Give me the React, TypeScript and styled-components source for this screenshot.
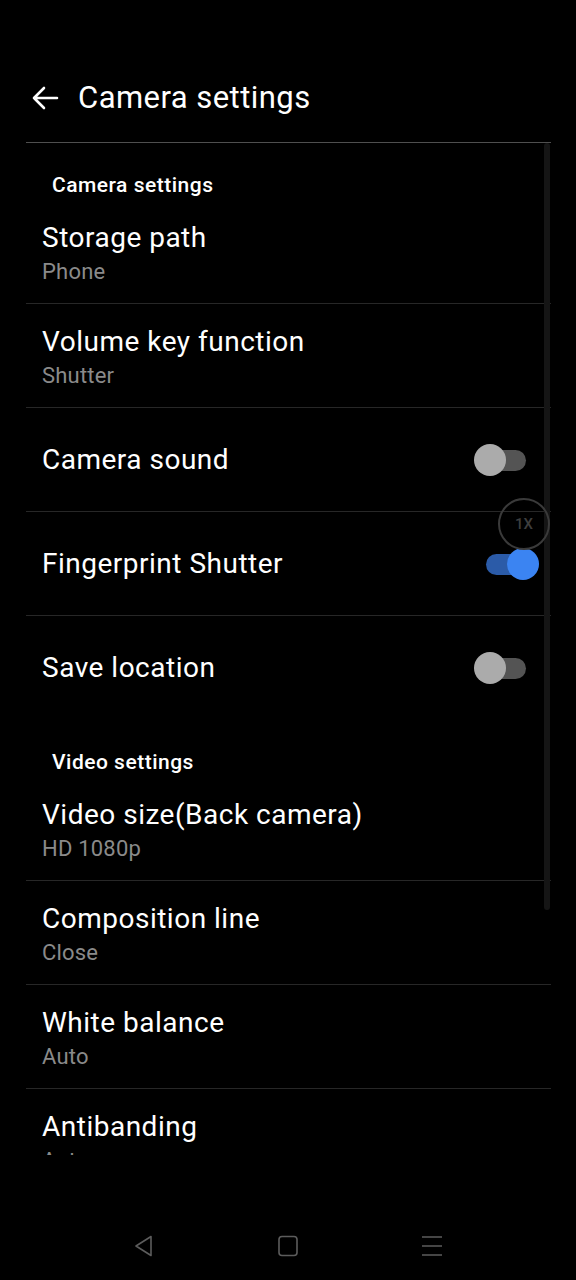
import React from "react";
import styled, { createGlobalStyle } from "styled-components";

const Global = createGlobalStyle`
  html, body { margin: 0; padding: 0; background: #000; }
  body { font-family: Roboto, "Noto Sans", "Liberation Sans", sans-serif; color: #fff; }
  * { box-sizing: border-box; }
`;

const Screen = styled.div`
  width: 576px;
  height: 1280px;
  background: #000;
  display: flex;
  flex-direction: column;
  overflow: hidden;
`;

const Header = styled.div`
  height: 142px;
  display: flex;
  align-items: flex-end;
  padding: 0 0 24px 31px;
  gap: 19px;
`;

const BackIcon = styled.svg`
  width: 28px;
  height: 28px;
  margin-bottom: 6px;
`;

const Title = styled.h1`
  margin: 0;
  font-size: 31px;
  line-height: 40px;
  font-weight: 400;
  color: #fff;
  letter-spacing: 0.45px;
`;

const ListArea = styled.div`
  margin: 0 25px 0 26px;
  height: 1013px;
  border-top: 1px solid #4f4f4f;
  position: relative;
  overflow: hidden;
`;

const Scrollbar = styled.div`
  position: absolute;
  right: 1px;
  top: 0;
  width: 6px;
  height: 767px;
  background: #151515;
  border-radius: 3px;
`;

const SectionHeader = styled.div`
  height: 57px;
  padding: 29px 0 0 26px;
  font-size: 21px;
  line-height: 26px;
  font-weight: 500;
  color: #fff;
  letter-spacing: 0.5px;
`;

const Row = styled.div<{ $last?: boolean }>`
  min-height: 104px;
  display: flex;
  align-items: center;
  justify-content: space-between;
  padding: 0 12px 0 16px;
  border-bottom: 1px solid ${(p) => (p.$last ? "transparent" : "#272727")};
`;

const TextCol = styled.div<{ $two?: boolean }>`
  display: flex;
  flex-direction: column;
  align-self: ${(p) => (p.$two ? "flex-start" : "center")};
  padding-top: ${(p) => (p.$two ? "21px" : "0")};
`;

const ItemTitle = styled.div`
  font-size: 28px;
  line-height: 34px;
  color: #fff;
  letter-spacing: 0.5px;
`;

const ItemSub = styled.div`
  font-size: 22px;
  line-height: 34px;
  color: #8a8a8a;
  letter-spacing: 0.2px;
`;

const SwitchBox = styled.div`
  position: relative;
  width: 65px;
  height: 32px;
  flex: none;
`;

const Track = styled.div<{ $on?: boolean }>`
  position: absolute;
  left: 12px;
  top: 6px;
  width: 40px;
  height: 21px;
  border-radius: 11px;
  background: ${(p) => (p.$on ? "#2b5ba8" : "#545454")};
`;

const Thumb = styled.div<{ $on?: boolean }>`
  position: absolute;
  top: 0;
  left: ${(p) => (p.$on ? "33px" : "0")};
  width: 32px;
  height: 32px;
  border-radius: 50%;
  background: ${(p) => (p.$on ? "#3b84f2" : "#ababab")};
`;

const ZoomBadge = styled.div`
  position: absolute;
  left: 472px;
  top: 355px;
  width: 52px;
  height: 52px;
  border-radius: 50%;
  border: 2px solid #3a3a3a;
  display: flex;
  align-items: center;
  justify-content: center;
  font-size: 15px;
  color: #3e3e3e;
  font-weight: 500;
`;

const NavBar = styled.div`
  flex: 1;
  display: flex;
  align-items: flex-start;
  justify-content: space-between;
  padding: 79px 133px 0 133px;
`;

const NavIcon = styled.svg`
  width: 22px;
  height: 24px;
`;

const Switch = ({ on }: { on?: boolean }) => (
  <SwitchBox>
    <Track $on={on} />
    <Thumb $on={on} />
  </SwitchBox>
);

type Item = { title: string; sub?: string; toggle?: boolean; on?: boolean; last?: boolean };

const cameraItems: Item[] = [
  { title: "Storage path", sub: "Phone" },
  { title: "Volume key function", sub: "Shutter" },
  { title: "Camera sound", toggle: true, on: false },
  { title: "Fingerprint Shutter", toggle: true, on: true },
  { title: "Save location", toggle: true, on: false, last: true },
];

const videoItems: Item[] = [
  { title: "Video size(Back camera)", sub: "HD 1080p" },
  { title: "Composition line", sub: "Close" },
  { title: "White balance", sub: "Auto" },
  { title: "Antibanding", sub: "Auto" },
];

const renderItem = (it: Item) => (
  <Row key={it.title} $last={it.last}>
    <TextCol $two={!!it.sub}>
      <ItemTitle>{it.title}</ItemTitle>
      {it.sub && <ItemSub>{it.sub}</ItemSub>}
    </TextCol>
    {it.toggle && <Switch on={it.on} />}
  </Row>
);

export default function App() {
  return (
    <Screen>
      <Global />
      <Header>
        <BackIcon viewBox="0 0 28 28" fill="none" stroke="#fff" strokeWidth="2.6" strokeLinecap="round" strokeLinejoin="round">
          <path d="M3 14H26M13 4L3 14L13 24" />
        </BackIcon>
        <Title>Camera settings</Title>
      </Header>
      <ListArea>
        <Scrollbar />
        <SectionHeader>Camera settings</SectionHeader>
        {cameraItems.map(renderItem)}
        <SectionHeader>Video settings</SectionHeader>
        {videoItems.map(renderItem)}
        <ZoomBadge>1X</ZoomBadge>
      </ListArea>
      <NavBar>
        <NavIcon viewBox="0 0 22 24" fill="none" stroke="#5c5c5c" strokeWidth="1.6" strokeLinejoin="round">
          <path d="M18 2.5L3 12L18 21.5Z" />
        </NavIcon>
        <NavIcon viewBox="0 0 22 24" fill="none" stroke="#5c5c5c" strokeWidth="1.6">
          <rect x="2" y="2.5" width="18" height="19" rx="3" />
        </NavIcon>
        <NavIcon viewBox="0 0 22 24" fill="none" stroke="#5c5c5c" strokeWidth="1.6">
          <path d="M1 3H21M1 12H21M1 21H21" />
        </NavIcon>
      </NavBar>
    </Screen>
  );
}
